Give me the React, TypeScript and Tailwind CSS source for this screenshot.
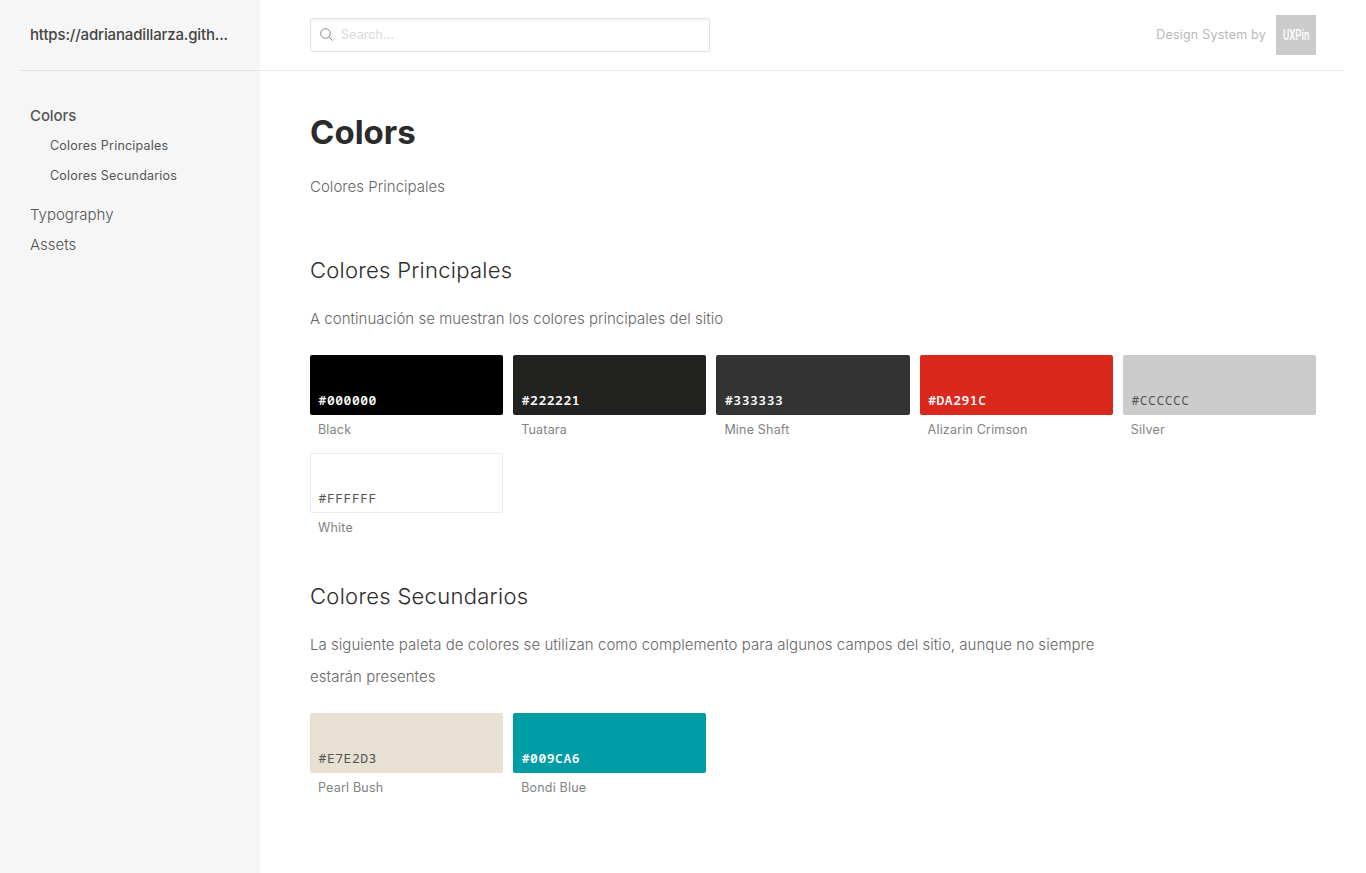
type Swatch = { hex: string; name: string; box: string };

const primary: Swatch[] = [
  { hex: "#000000", name: "Black", box: "bg-[#000000] text-white font-semibold" },
  { hex: "#222221", name: "Tuatara", box: "bg-[#222221] text-white font-semibold" },
  { hex: "#333333", name: "Mine Shaft", box: "bg-[#333333] text-white font-semibold" },
  { hex: "#DA291C", name: "Alizarin Crimson", box: "bg-[#da291c] text-white font-semibold" },
  { hex: "#CCCCCC", name: "Silver", box: "bg-[#cccccc] text-[#555]" },
  { hex: "#FFFFFF", name: "White", box: "bg-white text-[#555] shadow-[inset_0_0_0_1px_#ececec]" },
];

const secondary: Swatch[] = [
  { hex: "#E7E2D3", name: "Pearl Bush", box: "bg-[#e7e0d3] text-[#555]" },
  { hex: "#009CA6", name: "Bondi Blue", box: "bg-[#009ca6] text-white font-semibold" },
];

function Swatches({ items }: { items: Swatch[] }) {
  return (
    <ul className="grid grid-cols-5 gap-x-[10px]">
      {items.map((s) => (
        <li key={s.hex} className="h-[98px]">
          <div
            className={`flex h-[60px] items-end rounded-[2px] pb-[5px] pl-[8.6px] font-['Noto_Sans_Mono','DejaVu_Sans_Mono',monospace] text-[13px] leading-[19px] tracking-[0.53px] ${s.box}`}
          >
            {s.hex}
          </div>
          <p className="pl-[8px] pt-[5px] text-[12.5px] leading-[20px] tracking-[0.19px] text-[#828282]">{s.name}</p>
        </li>
      ))}
    </ul>
  );
}

export default function App() {
  return (
    <div className="flex h-[873px] w-full overflow-hidden bg-white font-['Inter',sans-serif] text-[#666]">
      <aside className="w-[260px] shrink-0 bg-[#f6f6f6] pl-5">
        <div className="flex h-[71px] items-center border-b border-[#e6e6e6] pl-[10px]">
          <span className="whitespace-nowrap text-[15px] font-medium tracking-[-0.15px] text-[#444]">
            https://adrianadillarza.gith...
          </span>
        </div>
        <nav className="pl-[10px] pt-[30px] text-[15px] leading-[30px] text-[#555]">
          <p className="font-medium tracking-[-0.1px]">Colors</p>
          <ul className="mb-[9px] pl-5 text-[12.5px] tracking-[0.22px]">
            <li>Colores Principales</li>
            <li>Colores Secundarios</li>
          </ul>
          <p className="font-light">Typography</p>
          <p className="font-light">Assets</p>
        </nav>
      </aside>
      <div className="min-w-0 flex-1">
        <header className="mr-[21px] flex h-[71px] items-center border-b border-[#ececec] pl-[50px] pr-[29px]">
          <div className="flex h-[34px] w-[400px] items-center rounded-[2px] border border-[#e2e2e2] pl-[9px] shadow-[inset_0_2px_2px_#f6f6f6]">
            <svg className="h-[14px] w-[14px]" viewBox="0 0 14 14" fill="none" stroke="#858585">
              <circle cx="5.5" cy="5.5" r="4.8" />
              <path d="M9 9 12.7 12.7" />
            </svg>
            <span className="ml-[7px] text-[12.5px] tracking-[0.1px] text-[#d9d9d9]">Search...</span>
          </div>
          <span className="ml-auto text-[12.5px] tracking-[0.22px] text-[#b8b8b8]">Design System by</span>
          <div className="ml-[10px] flex h-10 w-10 items-center justify-center bg-[#cccccc]">
            <span className="scale-x-[0.69] font-['Roboto',sans-serif] text-[14px] font-medium leading-5 text-white">
              UXPin
            </span>
          </div>
        </header>
        <main className="pl-[50px] pr-[50px]">
          <h1 className="pb-px pt-[36px] text-[33px] font-bold leading-[50px] text-[#2b2b2b]">Colors</h1>
          <p className="pt-[13px] text-[15px] font-light leading-[32px] tracking-[0.03px]">Colores Principales</p>
          <h2 className="pt-[51px] text-[22px] font-light leading-[32px] tracking-[0.26px] text-[#2b2b2b]">
            Colores Principales
          </h2>
          <p className="pb-[20px] pt-[17px] text-[15px] font-light leading-[32px] tracking-[0.02px]">
            A continuación se muestran los colores principales del sitio
          </p>
          <Swatches items={primary} />
          <h2 className="pt-[29px] text-[22px] font-light leading-[32px] tracking-[0.29px] text-[#2b2b2b]">
            Colores Secundarios
          </h2>
          <p className="w-[800px] pb-[20px] pt-[17px] text-[15px] font-light leading-[32px] tracking-[0.04px]">
            La siguiente paleta de colores se utilizan como complemento para algunos campos del sitio, aunque no siempre
            estarán presentes
          </p>
          <Swatches items={secondary} />
        </main>
      </div>
    </div>
  );
}
